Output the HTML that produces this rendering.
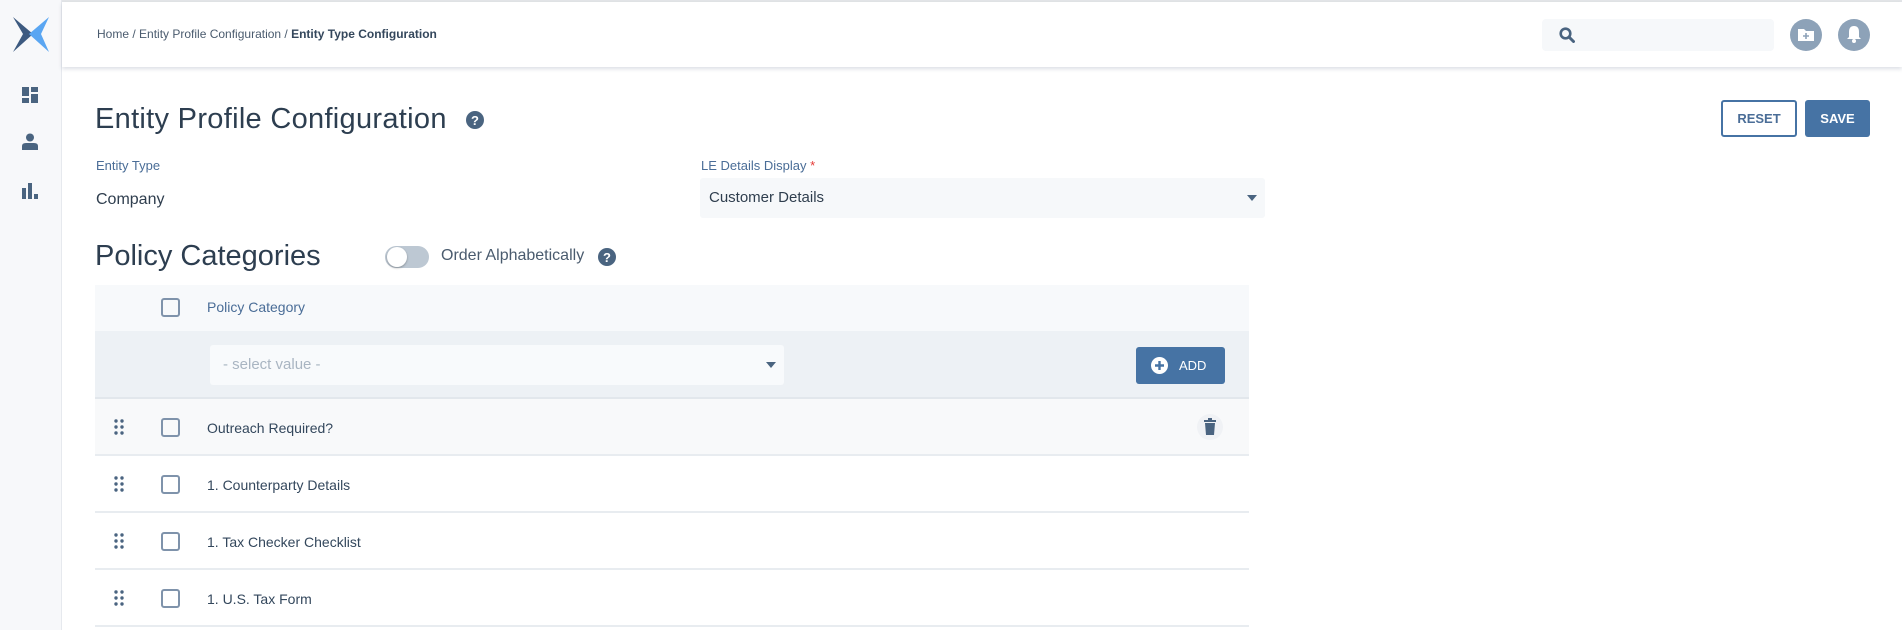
<!DOCTYPE html>
<html><head><meta charset="utf-8"><style>
*{box-sizing:border-box;margin:0;padding:0}
body{width:1902px;height:630px;overflow:hidden;background:#fff;font-family:"Liberation Sans",sans-serif;color:#2f3e4e;position:relative}
.abs{position:absolute}
.side{left:0;top:0;width:62px;height:630px;background:#f7f8fa;border-right:1px solid #e6e9ee}
.top{left:62px;top:2px;right:0;height:65px;background:#fff;box-shadow:0 2px 4px rgba(60,80,110,.18)}
.topline{left:0;top:0;width:1902px;height:2px;background:#e3e5e8}
.lbl{color:#4a6d97;font-size:13px}
.cb{width:19px;height:19px;border:2px solid #7f93ab;border-radius:3px}
.row{left:95px;width:1154px;height:57px;border-bottom:2px solid #e8ecf0}
.txt{font-size:14px;color:#33475c}
</style></head><body>
<div class="abs topline"></div>
<div class="abs side">
<svg class="abs" style="left:13px;top:17px" width="36" height="35" viewBox="0 0 36 35"><path d="M0 0 L20 17 L0 35 L10 17Z" fill="#3d5a80"/><path d="M36 0 L16 17 L36 35 L28 17Z" fill="#5aa6f2"/></svg>
<svg class="abs" style="left:22px;top:87px" width="16" height="16" viewBox="0 0 16 16" fill="#4a6480"><rect x="0" y="0" width="7" height="9"/><rect x="9" y="0" width="7" height="5"/><rect x="9" y="7" width="7" height="9"/><rect x="0" y="11" width="7" height="5"/></svg>
<svg class="abs" style="left:22px;top:133px" width="16" height="17" viewBox="0 0 16 17" fill="#4a6480"><circle cx="8" cy="4.5" r="4"/><path d="M0 17 V13 Q0 10 4 10 H12 Q16 10 16 13 V17Z"/></svg>
<svg class="abs" style="left:22px;top:183px" width="16" height="16" viewBox="0 0 16 16" fill="#4a6480"><rect x="0" y="5" width="4" height="11"/><rect x="6" y="0" width="4" height="16"/><rect x="12" y="11" width="4" height="5"/></svg>
</div>
<div class="abs top">
<div class="abs" style="left:35px;top:25px;font-size:12px;color:#4a5b6e">Home / Entity Profile Configuration / <b style="color:#34475c">Entity Type Configuration</b></div>
<div class="abs" style="left:1480px;top:17px;width:232px;height:32px;background:#f6f8fa;border-radius:4px"></div>
<svg class="abs" style="left:1497px;top:25px" width="16" height="16" viewBox="0 0 16 16"><circle cx="6.5" cy="6.5" r="4.8" fill="none" stroke="#4a6480" stroke-width="2.6"/><path d="M10 10 L14.5 14.5" stroke="#4a6480" stroke-width="3" stroke-linecap="round"/></svg>
<div class="abs" style="left:1728px;top:17px;width:32px;height:32px;border-radius:50%;background:#8da2b8"></div>
<svg class="abs" style="left:1735px;top:25px" width="18" height="15" viewBox="0 0 18 15"><path d="M1 2 H7 L9 4 H17 V14 H1Z" fill="#fff"/><path d="M9 6 V12 M6 9 H12" stroke="#8da2b8" stroke-width="1.6"/></svg>
<div class="abs" style="left:1776px;top:17px;width:32px;height:32px;border-radius:50%;background:#8da2b8"></div>
<svg class="abs" style="left:1784px;top:23px" width="16" height="19" viewBox="0 0 16 19"><path d="M8 1 Q13 1 13 7 V12 L15 14 H1 L3 12 V7 Q3 1 8 1Z" fill="#fff"/><circle cx="8" cy="16" r="2" fill="#fff"/></svg>
</div>
<div class="abs" style="left:95px;top:103px;font-size:29px;color:#2d3e50;letter-spacing:.3px">Entity Profile Configuration</div>
<svg class="abs" style="left:466px;top:111px" width="18" height="18" viewBox="0 0 18 18"><circle cx="9" cy="9" r="9" fill="#4a6480"/><text x="9" y="14" text-anchor="middle" font-size="13" font-weight="bold" fill="#fff" font-family="Liberation Sans">?</text></svg>
<div class="abs" style="left:1721px;top:100px;width:76px;height:37px;border:2px solid #4673a4;border-radius:3px;color:#4a6d97;font-size:13px;font-weight:bold;text-align:center;line-height:33px">RESET</div>
<div class="abs" style="left:1805px;top:100px;width:65px;height:37px;background:#4673a4;border-radius:3px;color:#fff;font-size:13px;font-weight:bold;text-align:center;line-height:37px">SAVE</div>
<div class="abs lbl" style="left:96px;top:158px">Entity Type</div>
<div class="abs" style="left:96px;top:191px;font-size:16px;color:#2f3e4e">Company</div>
<div class="abs lbl" style="left:701px;top:158px">LE Details Display <span style="color:#e53935">*</span></div>
<div class="abs" style="left:700px;top:178px;width:565px;height:40px;background:#f6f8fa;border-radius:3px"></div>
<div class="abs" style="left:709px;top:189px;font-size:15px;color:#2f3e4e">Customer Details</div>
<div class="abs" style="left:1247px;top:195px;border-left:5px solid transparent;border-right:5px solid transparent;border-top:6px solid #4a6480"></div>
<div class="abs" style="left:95px;top:240px;font-size:29px;color:#2d3e50">Policy Categories</div>
<div class="abs" style="left:385px;top:246px;width:44px;height:22px;border-radius:11px;background:#bdc8d3"></div>
<div class="abs" style="left:387px;top:247px;width:20px;height:20px;border-radius:50%;background:#fff;box-shadow:0 1px 2px rgba(0,0,0,.3)"></div>
<div class="abs" style="left:441px;top:247px;font-size:16px;color:#4a5b6e">Order Alphabetically</div>
<svg class="abs" style="left:598px;top:248px" width="18" height="18" viewBox="0 0 18 18"><circle cx="9" cy="9" r="9" fill="#4a6480"/><text x="9" y="14" text-anchor="middle" font-size="13" font-weight="bold" fill="#fff" font-family="Liberation Sans">?</text></svg>
<div class="abs" style="left:95px;top:285px;width:1154px;height:46px;background:#f7f9fb"></div>
<div class="abs cb" style="left:161px;top:298px"></div>
<div class="abs" style="left:207px;top:299px;font-size:14px;color:#4a6d97">Policy Category</div>
<div class="abs" style="left:95px;top:331px;width:1154px;height:68px;background:#edf1f5;border-bottom:2px solid #e2e7ec"></div>
<div class="abs" style="left:210px;top:345px;width:574px;height:40px;background:#f8fafc;border-radius:3px"></div>
<div class="abs" style="left:223px;top:356px;font-size:15px;color:#a9b5c2">- select value -</div>
<div class="abs" style="left:766px;top:362px;border-left:5px solid transparent;border-right:5px solid transparent;border-top:6px solid #4a6480"></div>
<div class="abs" style="left:1136px;top:347px;width:89px;height:37px;background:#4673a4;border-radius:3px"></div>
<svg class="abs" style="left:1151px;top:357px" width="17" height="17" viewBox="0 0 17 17"><circle cx="8.5" cy="8.5" r="8.5" fill="#fff"/><path d="M8.5 4 V13 M4 8.5 H13" stroke="#4673a4" stroke-width="2.4"/></svg>
<div class="abs" style="left:1179px;top:358px;font-size:13px;color:#fff">ADD</div>
<div class="abs row" style="top:399px;background:#f8f9fa"></div>
<div class="abs row" style="top:456px"></div>
<div class="abs row" style="top:513px"></div>
<div class="abs row" style="top:570px"></div>
<svg class="abs" style="left:114px;top:419px" width="10" height="16" viewBox="0 0 10 16" fill="#4a6480"><circle cx="2" cy="2" r="1.7"/><circle cx="8" cy="2" r="1.7"/><circle cx="2" cy="8" r="1.7"/><circle cx="8" cy="8" r="1.7"/><circle cx="2" cy="14" r="1.7"/><circle cx="8" cy="14" r="1.7"/></svg>
<div class="abs cb" style="left:161px;top:418px"></div>
<div class="abs txt" style="left:207px;top:420px">Outreach Required?</div>
<div class="abs" style="left:1197px;top:414px;width:26px;height:26px;border-radius:50%;background:#f0f2f5"></div>
<svg class="abs" style="left:1204px;top:418px" width="12" height="17" viewBox="0 0 12 17" fill="#4a6480"><rect x="0" y="2" width="12" height="2"/><rect x="4" y="0" width="4" height="2"/><path d="M1 5 H11 L10 17 H2Z"/></svg>
<svg class="abs" style="left:114px;top:476px" width="10" height="16" viewBox="0 0 10 16" fill="#4a6480"><circle cx="2" cy="2" r="1.7"/><circle cx="8" cy="2" r="1.7"/><circle cx="2" cy="8" r="1.7"/><circle cx="8" cy="8" r="1.7"/><circle cx="2" cy="14" r="1.7"/><circle cx="8" cy="14" r="1.7"/></svg>
<div class="abs cb" style="left:161px;top:475px"></div>
<div class="abs txt" style="left:207px;top:477px">1. Counterparty Details</div>
<svg class="abs" style="left:114px;top:533px" width="10" height="16" viewBox="0 0 10 16" fill="#4a6480"><circle cx="2" cy="2" r="1.7"/><circle cx="8" cy="2" r="1.7"/><circle cx="2" cy="8" r="1.7"/><circle cx="8" cy="8" r="1.7"/><circle cx="2" cy="14" r="1.7"/><circle cx="8" cy="14" r="1.7"/></svg>
<div class="abs cb" style="left:161px;top:532px"></div>
<div class="abs txt" style="left:207px;top:534px">1. Tax Checker Checklist</div>
<svg class="abs" style="left:114px;top:590px" width="10" height="16" viewBox="0 0 10 16" fill="#4a6480"><circle cx="2" cy="2" r="1.7"/><circle cx="8" cy="2" r="1.7"/><circle cx="2" cy="8" r="1.7"/><circle cx="8" cy="8" r="1.7"/><circle cx="2" cy="14" r="1.7"/><circle cx="8" cy="14" r="1.7"/></svg>
<div class="abs cb" style="left:161px;top:589px"></div>
<div class="abs txt" style="left:207px;top:591px">1. U.S. Tax Form</div>
</body></html>
